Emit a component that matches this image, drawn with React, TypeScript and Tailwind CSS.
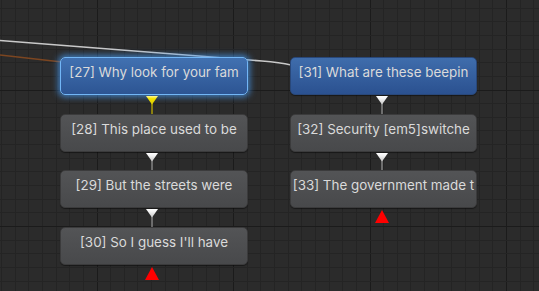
import React from "react";

type Variant = "gray" | "blue" | "selected";

const NODE_STYLE: Record<Variant, string> = {
  gray: "bg-gradient-to-b from-[#535456] to-[#48494b] border border-[#3b3b3c] shadow-[0_1px_1px_rgba(0,0,0,0.45)]",
  blue: "bg-gradient-to-b from-[#3f6dac] to-[#2b5190] border border-[#29487a] shadow-[0_1px_1px_rgba(0,0,0,0.45)]",
  selected:
    "bg-gradient-to-b from-[#4171b1] to-[#2d5593] border border-[#72b6f6] shadow-[0_0_6px_2px_rgba(70,150,235,0.75)]",
};

const W = 539;
const H = 291;
const STEP = 13.65;

// grid lines, snapped to whole pixels so they stay crisp
const vLines = Array.from({ length: 40 }, (_, k) => ({ x: Math.round(0.95 + k * STEP), major: k % 10 === 7 }));
const hLines = Array.from({ length: 22 }, (_, k) => ({ y: Math.round(7.6 + k * STEP), major: k % 10 === 6 }));

const Grid: React.FC = () => (
  <svg className="absolute inset-0" width={W} height={H}>
    {vLines.map((l, i) => (
      <line key={"v" + i} x1={l.x + 0.5} y1={0} x2={l.x + 0.5} y2={H} stroke={l.major ? "#1b1b1b" : "#242424"} strokeWidth={1} />
    ))}
    {hLines.map((l, i) => (
      <line key={"h" + i} x1={0} y1={l.y + 0.5} x2={W} y2={l.y + 0.5} stroke={l.major ? "#1b1b1b" : "#242424"} strokeWidth={1} />
    ))}
    {/* transitions coming in from off-screen */}
    <path d="M0 40.5 L262 61 Q280 62.5 291 65" fill="none" stroke="#c9c9c9" strokeWidth={1.5} />
    <path d="M0 55 L62 62" fill="none" stroke="#7c4621" strokeWidth={1.5} />
  </svg>
);

const Node: React.FC<{ label: string; variant?: Variant }> = ({ label, variant = "gray" }) => (
  <div
    className={`h-[38px] rounded-[5px] flex items-center justify-center pb-[8px] overflow-hidden whitespace-nowrap text-[13.4px] text-[#dadada] ${NODE_STYLE[variant]}`}
  >
    {label}
  </div>
);

// down arrow + stem into the next node
const Link: React.FC<{ yellow?: boolean }> = ({ yellow }) => (
  <div className="h-[18.67px] flex justify-center pr-[4px]">
    <svg width={12} height={19} viewBox="0 0 12 19">
      <defs>
        <linearGradient id={yellow ? "gy" : "gw"} x1="0" y1="0" x2="0" y2="1">
          <stop offset="0" stopColor={yellow ? "#fff7a0" : "#ffffff"} />
          <stop offset="0.3" stopColor={yellow ? "#f4e400" : "#f4f4f4"} />
          <stop offset="1" stopColor={yellow ? "#d9c800" : "#c4c4c4"} />
        </linearGradient>
      </defs>
      <line x1={6} y1={8} x2={6} y2={19} stroke={yellow ? "#cdbb00" : "#9c9c9c"} strokeWidth={1.2} />
      <polygon points="0,1 12,1 6,9.5" fill={`url(#${yellow ? "gy" : "gw"})`} />
    </svg>
  </div>
);

const Exit: React.FC = () => (
  <div className="flex justify-center pr-[4px] pt-[2px]">
    <svg width={14} height={13} viewBox="0 0 14 13">
      <polygon points="7,0 14,13 0,13" fill="#ff0000" />
    </svg>
  </div>
);

const App: React.FC = () => {
  return (
    <div
      className="relative w-[539px] h-[291px] overflow-hidden bg-[#2b2b2b]"
      style={{ fontFamily: "Inter, 'Noto Sans', sans-serif" }}
    >
      <Grid />

      {/* left chain */}
      <div className="absolute left-[60px] top-[57px] w-[188px] flex flex-col">
        <Node label="[27] Why look for your fam" variant="selected" />
        <Link yellow />
        <Node label="[28] This place used to be" />
        <Link />
        <Node label="[29] But the streets were" />
        <Link />
        <Node label="[30] So I guess I'll have" />
        <Exit />
      </div>

      {/* right chain */}
      <div className="absolute left-[290px] top-[57px] w-[187px] flex flex-col">
        <Node label="[31] What are these beepin" variant="blue" />
        <Link />
        <Node label="[32] Security [em5]switche" />
        <Link />
        <Node label="[33] The government made t" />
        <Exit />
      </div>
    </div>
  );
};

export default App;
